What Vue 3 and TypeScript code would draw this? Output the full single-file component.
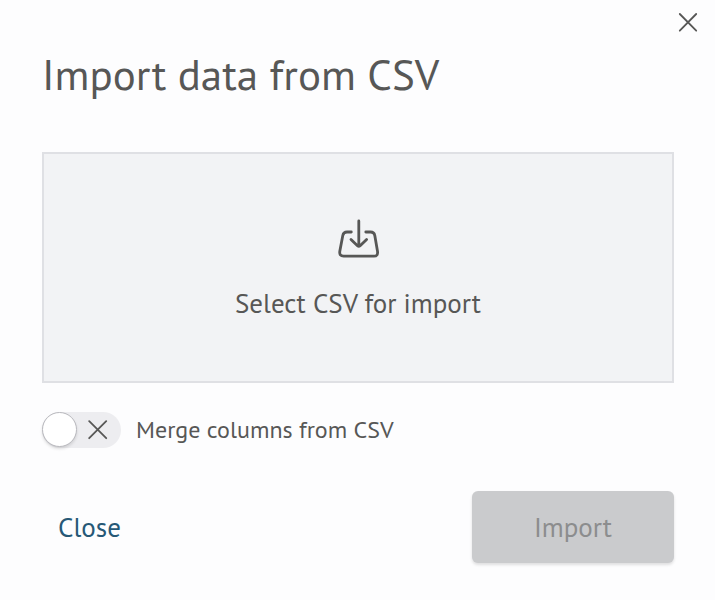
<script setup lang="ts">
import { ref } from 'vue'

const open = ref(true)
const mergeColumns = ref(false)
const fileName = ref('')

function onFileChange(event: Event) {
  const input = event.target as HTMLInputElement
  fileName.value = input.files?.[0]?.name ?? ''
}

function close() {
  open.value = false
}
</script>

<template>
  <main v-if="open" class="dialog" role="dialog" aria-labelledby="dialog-title">
    <header class="top">
      <button class="dismiss" type="button" aria-label="Close dialog" @click="close">
        <svg viewBox="0 0 20 20" width="20" height="20" aria-hidden="true">
          <path d="M1.8 2 18.2 18.7M18.2 2 1.8 18.7" />
        </svg>
      </button>
    </header>

    <form class="content" @submit.prevent>
      <h1 id="dialog-title" class="title">Import data from CSV</h1>

      <label class="dropzone">
        <input class="hidden-control" type="file" accept=".csv" @change="onFileChange" />
        <svg class="import-icon" viewBox="0 0 42 40" width="42" height="40" aria-hidden="true">
          <path d="M14.3 13H10Q6.5 13 5.8 16.5L2.8 32.2Q2.1 37.2 6.6 37.2H37Q41.2 37.2 40.5 32.2L37.8 16.5Q37.1 13 33.6 13H28.8" />
          <path d="M21.8 2V27M14 20.4 20.5 26.8Q21.8 28 23.1 26.8L29.6 20.4" />
        </svg>
        <span>{{ fileName || 'Select CSV for import' }}</span>
      </label>

      <label class="merge">
        <input v-model="mergeColumns" class="hidden-control" type="checkbox" role="switch" />
        <span class="track" :class="{ on: mergeColumns }">
          <span class="knob"></span>
          <svg class="cross" viewBox="0 0 20 20" width="20" height="20" aria-hidden="true">
            <path d="M1.2 1.2 18.2 18.2M18.2 1.2 1.2 18.2" />
          </svg>
        </span>
        <span>Merge columns from CSV</span>
      </label>

      <footer class="actions">
        <button class="close" type="button" @click="close">Close</button>
        <button class="import" type="submit" :disabled="!fileName">Import</button>
      </footer>
    </form>
  </main>
</template>

<style>
body {
  background: #fdfdfe;
}
</style>

<style scoped>
.dialog {
  color: #575756;
  font-family: "PT Sans", "Noto Sans", sans-serif;
  font-size: 27px;
}

.top {
  display: flex;
  justify-content: flex-end;
  padding: 12px 17px 0;
}

button {
  border: 0;
  padding: 0;
  background: none;
  color: inherit;
  font: inherit;
  cursor: pointer;
}

svg {
  display: block;
  fill: none;
  stroke: currentColor;
  stroke-width: 1.8;
  stroke-linecap: round;
  stroke-linejoin: round;
}

.content {
  display: flex;
  flex-direction: column;
  padding: 12px 41px 36px 42px;
}

.title {
  margin: 0 0 48px;
  font-size: 43px;
  font-weight: 400;
  line-height: 60px;
  white-space: nowrap;
}

.dropzone {
  display: flex;
  flex-direction: column;
  align-items: center;
  gap: 27px;
  padding: 65px 24px 61px;
  border: 2px solid #dfe0e4;
  background: #f2f3f5;
  line-height: 34px;
  cursor: pointer;
}

.import-icon {
  stroke-width: 2.8;
}

.hidden-control {
  position: absolute;
  width: 1px;
  height: 1px;
  margin: 0;
  opacity: 0;
}

.merge {
  display: flex;
  align-items: center;
  align-self: flex-start;
  gap: 15px;
  margin-top: 29px;
  font-size: 24px;
  line-height: 36px;
  cursor: pointer;
}

.track {
  display: flex;
  align-items: center;
  gap: 11px;
  width: 79px;
  height: 36px;
  border-radius: 18px;
  background: #ededf0;
}

.track.on {
  flex-direction: row-reverse;
}

.track.on .cross {
  visibility: hidden;
}

.knob {
  box-sizing: border-box;
  align-self: flex-start;
  width: 35px;
  height: 35px;
  border: 1px solid #b9b9be;
  border-radius: 50%;
  background: #fff;
  box-shadow: 0 2px 3px rgba(0, 0, 0, 0.12);
}

.actions {
  display: flex;
  align-items: center;
  justify-content: space-between;
  margin-top: 43px;
  line-height: 72px;
}

.close {
  padding: 0 16px;
  color: #265876;
}

.import {
  width: 202px;
  border-radius: 6px;
  background: #cacbcd;
  box-shadow: 0 2px 3px rgba(0, 0, 0, 0.12);
  color: #8c8d8e;
}

.import:disabled {
  cursor: default;
}
</style>
